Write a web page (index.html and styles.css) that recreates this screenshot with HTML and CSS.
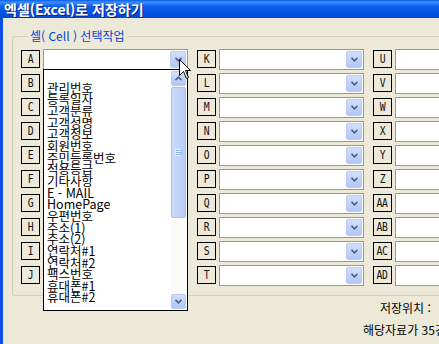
FILE: index.html
```html
<!DOCTYPE html>
<html lang="ko">
<head>
<meta charset="utf-8">
<title>엑셀(Excel)로 저장하기</title>
<link rel="stylesheet" href="styles.css">
</head>
<body>
<div class="window">
  <div class="titlebar"><span class="title">엑셀(Excel)로 저장하기</span></div>
  <div class="frame">
    <fieldset class="group">
      <legend class="legend">셀( Cell ) 선택작업</legend>
      <div class="grid">
        <div class="cell"><span class="tag"><span class="tl">A</span></span><div class="combo"><span class="field"></span><span class="btn"><svg width="7" height="5" viewBox="0 0 7 5"><path d="M0.5 0.8 L3.5 3.8 L6.5 0.8" fill="none" stroke="#4d6185" stroke-width="1.6"/></svg></span></div></div>
        <div class="cell"><span class="tag"><span class="tl">B</span></span><div class="combo"><span class="field"></span><span class="btn"><svg width="7" height="5" viewBox="0 0 7 5"><path d="M0.5 0.8 L3.5 3.8 L6.5 0.8" fill="none" stroke="#4d6185" stroke-width="1.6"/></svg></span></div></div>
        <div class="cell"><span class="tag"><span class="tl">C</span></span><div class="combo"><span class="field"></span><span class="btn"><svg width="7" height="5" viewBox="0 0 7 5"><path d="M0.5 0.8 L3.5 3.8 L6.5 0.8" fill="none" stroke="#4d6185" stroke-width="1.6"/></svg></span></div></div>
        <div class="cell"><span class="tag"><span class="tl">D</span></span><div class="combo"><span class="field"></span><span class="btn"><svg width="7" height="5" viewBox="0 0 7 5"><path d="M0.5 0.8 L3.5 3.8 L6.5 0.8" fill="none" stroke="#4d6185" stroke-width="1.6"/></svg></span></div></div>
        <div class="cell"><span class="tag"><span class="tl">E</span></span><div class="combo"><span class="field"></span><span class="btn"><svg width="7" height="5" viewBox="0 0 7 5"><path d="M0.5 0.8 L3.5 3.8 L6.5 0.8" fill="none" stroke="#4d6185" stroke-width="1.6"/></svg></span></div></div>
        <div class="cell"><span class="tag"><span class="tl">F</span></span><div class="combo"><span class="field"></span><span class="btn"><svg width="7" height="5" viewBox="0 0 7 5"><path d="M0.5 0.8 L3.5 3.8 L6.5 0.8" fill="none" stroke="#4d6185" stroke-width="1.6"/></svg></span></div></div>
        <div class="cell"><span class="tag"><span class="tl">G</span></span><div class="combo"><span class="field"></span><span class="btn"><svg width="7" height="5" viewBox="0 0 7 5"><path d="M0.5 0.8 L3.5 3.8 L6.5 0.8" fill="none" stroke="#4d6185" stroke-width="1.6"/></svg></span></div></div>
        <div class="cell"><span class="tag"><span class="tl">H</span></span><div class="combo"><span class="field"></span><span class="btn"><svg width="7" height="5" viewBox="0 0 7 5"><path d="M0.5 0.8 L3.5 3.8 L6.5 0.8" fill="none" stroke="#4d6185" stroke-width="1.6"/></svg></span></div></div>
        <div class="cell"><span class="tag"><span class="tl">I</span></span><div class="combo"><span class="field"></span><span class="btn"><svg width="7" height="5" viewBox="0 0 7 5"><path d="M0.5 0.8 L3.5 3.8 L6.5 0.8" fill="none" stroke="#4d6185" stroke-width="1.6"/></svg></span></div></div>
        <div class="cell"><span class="tag"><span class="tl">J</span></span><div class="combo"><span class="field"></span><span class="btn"><svg width="7" height="5" viewBox="0 0 7 5"><path d="M0.5 0.8 L3.5 3.8 L6.5 0.8" fill="none" stroke="#4d6185" stroke-width="1.6"/></svg></span></div></div>

        <div class="cell"><span class="tag"><span class="tl">K</span></span><div class="combo"><span class="field"></span><span class="btn"><svg width="7" height="5" viewBox="0 0 7 5"><path d="M0.5 0.8 L3.5 3.8 L6.5 0.8" fill="none" stroke="#4d6185" stroke-width="1.6"/></svg></span></div></div>
        <div class="cell"><span class="tag"><span class="tl">L</span></span><div class="combo"><span class="field"></span><span class="btn"><svg width="7" height="5" viewBox="0 0 7 5"><path d="M0.5 0.8 L3.5 3.8 L6.5 0.8" fill="none" stroke="#4d6185" stroke-width="1.6"/></svg></span></div></div>
        <div class="cell"><span class="tag"><span class="tl">M</span></span><div class="combo"><span class="field"></span><span class="btn"><svg width="7" height="5" viewBox="0 0 7 5"><path d="M0.5 0.8 L3.5 3.8 L6.5 0.8" fill="none" stroke="#4d6185" stroke-width="1.6"/></svg></span></div></div>
        <div class="cell"><span class="tag"><span class="tl">N</span></span><div class="combo"><span class="field"></span><span class="btn"><svg width="7" height="5" viewBox="0 0 7 5"><path d="M0.5 0.8 L3.5 3.8 L6.5 0.8" fill="none" stroke="#4d6185" stroke-width="1.6"/></svg></span></div></div>
        <div class="cell"><span class="tag"><span class="tl">O</span></span><div class="combo"><span class="field"></span><span class="btn"><svg width="7" height="5" viewBox="0 0 7 5"><path d="M0.5 0.8 L3.5 3.8 L6.5 0.8" fill="none" stroke="#4d6185" stroke-width="1.6"/></svg></span></div></div>
        <div class="cell"><span class="tag"><span class="tl">P</span></span><div class="combo"><span class="field"></span><span class="btn"><svg width="7" height="5" viewBox="0 0 7 5"><path d="M0.5 0.8 L3.5 3.8 L6.5 0.8" fill="none" stroke="#4d6185" stroke-width="1.6"/></svg></span></div></div>
        <div class="cell"><span class="tag"><span class="tl">Q</span></span><div class="combo"><span class="field"></span><span class="btn"><svg width="7" height="5" viewBox="0 0 7 5"><path d="M0.5 0.8 L3.5 3.8 L6.5 0.8" fill="none" stroke="#4d6185" stroke-width="1.6"/></svg></span></div></div>
        <div class="cell"><span class="tag"><span class="tl">R</span></span><div class="combo"><span class="field"></span><span class="btn"><svg width="7" height="5" viewBox="0 0 7 5"><path d="M0.5 0.8 L3.5 3.8 L6.5 0.8" fill="none" stroke="#4d6185" stroke-width="1.6"/></svg></span></div></div>
        <div class="cell"><span class="tag"><span class="tl">S</span></span><div class="combo"><span class="field"></span><span class="btn"><svg width="7" height="5" viewBox="0 0 7 5"><path d="M0.5 0.8 L3.5 3.8 L6.5 0.8" fill="none" stroke="#4d6185" stroke-width="1.6"/></svg></span></div></div>
        <div class="cell"><span class="tag"><span class="tl">T</span></span><div class="combo"><span class="field"></span><span class="btn"><svg width="7" height="5" viewBox="0 0 7 5"><path d="M0.5 0.8 L3.5 3.8 L6.5 0.8" fill="none" stroke="#4d6185" stroke-width="1.6"/></svg></span></div></div>

        <div class="cell"><span class="tag"><span class="tl">U</span></span><div class="combo"><span class="field"></span></div></div>
        <div class="cell"><span class="tag"><span class="tl">V</span></span><div class="combo"><span class="field"></span></div></div>
        <div class="cell"><span class="tag"><span class="tl">W</span></span><div class="combo"><span class="field"></span></div></div>
        <div class="cell"><span class="tag"><span class="tl">X</span></span><div class="combo"><span class="field"></span></div></div>
        <div class="cell"><span class="tag"><span class="tl">Y</span></span><div class="combo"><span class="field"></span></div></div>
        <div class="cell"><span class="tag"><span class="tl">Z</span></span><div class="combo"><span class="field"></span></div></div>
        <div class="cell"><span class="tag"><span class="tl">AA</span></span><div class="combo"><span class="field"></span></div></div>
        <div class="cell"><span class="tag"><span class="tl">AB</span></span><div class="combo"><span class="field"></span></div></div>
        <div class="cell"><span class="tag"><span class="tl">AC</span></span><div class="combo"><span class="field"></span></div></div>
        <div class="cell"><span class="tag"><span class="tl">AD</span></span><div class="combo"><span class="field"></span></div></div>
      </div>
    </fieldset>
    <div class="footer">
      <div class="line1">저장위치 : </div>
      <div class="line2">해당자료가 35건</div>
    </div>
  </div>
</div>

<div class="dropdown">
  <div class="items">
    <div class="item">&nbsp;</div>
    <div class="item">관리번호</div>
    <div class="item">등록일자</div>
    <div class="item">고객분류</div>
    <div class="item">고객성명</div>
    <div class="item">고객정보</div>
    <div class="item">회원번호</div>
    <div class="item">주민등록번호</div>
    <div class="item">적용등급</div>
    <div class="item">기타사항</div>
    <div class="item">E - MAIL</div>
    <div class="item">HomePage</div>
    <div class="item">우편번호</div>
    <div class="item">주소(1)</div>
    <div class="item">주소(2)</div>
    <div class="item">연락처#1</div>
    <div class="item">연락처#2</div>
    <div class="item">팩스번호</div>
    <div class="item">휴대폰#1</div>
    <div class="item">휴대폰#2</div>
  </div>
  <div class="scrollbar">
    <span class="sbtn"><svg width="7" height="5" viewBox="0 0 7 5"><path d="M0.5 4.2 L3.5 1.2 L6.5 4.2" fill="none" stroke="#4d6185" stroke-width="1.6"/></svg></span>
    <span class="track-top"></span>
    <span class="thumb"><svg width="7" height="7" viewBox="0 0 7 7"><path d="M0 0.5 H6 M0 2.5 H6 M0 4.5 H6 M0 6.5 H6" stroke="#eef3fe" stroke-width="1"/><path d="M1 1.5 H7 M1 3.5 H7 M1 5.5 H7" stroke="#8cb0f8" stroke-width="1"/></svg></span>
    <span class="track"></span>
    <span class="sbtn"><svg width="7" height="5" viewBox="0 0 7 5"><path d="M0.5 0.8 L3.5 3.8 L6.5 0.8" fill="none" stroke="#4d6185" stroke-width="1.6"/></svg></span>
  </div>
</div>

<svg class="cursor" width="13" height="21" viewBox="0 0 13 21">
  <path d="M0.5 0.5 L0.5 16.5 L4.5 12.5 L7.5 19.5 L9.5 18.5 L6.5 11.5 L11.5 11.5 Z" fill="#fff" stroke="#000" stroke-width="1" stroke-linejoin="miter"/>
</svg>
</body>
</html>
```

FILE: styles.css
```css
html, body {
  margin: 0;
  padding: 0;
}
body {
  width: 439px;
  height: 344px;
  overflow: hidden;
  background: #ece9d8;
  font-family: "Noto Sans CJK KR", "Noto Sans", sans-serif;
  font-size: 12px;
  position: relative;
}
.window {
  display: flex;
  flex-direction: column;
  height: 344px;
}
.titlebar {
  height: 18px;
  flex: none;
  background: linear-gradient(#0a5ef0 0%, #3c8dfa 12%, #0b5fee 35%, #0453e3 70%, #0049d4 100%);
  display: flex;
  align-items: center;
  padding-left: 4px;
}
.title {
  color: #fff;
  font-weight: bold;
  font-size: 14px;
  line-height: 16px;
  text-shadow: 1px 1px 0 #0a1f8a;
}
.frame {
  flex: 1;
  border-left: 3px solid #0d4fe2;
  display: flex;
  flex-direction: column;
}
.group {
  margin: 11px 0 0 9px;
  padding: 6px 0 9px 8px;
  border: 1px solid #d0d0bf;
  border-right: none;
  border-radius: 3px 0 0 3px;
  min-width: 0;
}
.legend {
  color: #0046d5;
  font-size: 12px;
  line-height: 14px;
  padding: 0 2px;
  margin-left: 7px;
}
.grid {
  display: grid;
  grid-auto-flow: column;
  grid-template-rows: repeat(10, 21px);
  grid-auto-columns: 167px;
  row-gap: 3px;
  column-gap: 9px;
}
.cell {
  display: flex;
  align-items: flex-start;
  gap: 3px;
}
.tag {
  box-sizing: border-box;
  width: 19px;
  height: 18px;
  margin-top: 1px;
  border: 1px solid #000;
  display: flex;
  align-items: center;
  justify-content: center;
  flex: none;
  overflow: hidden;
}
.tl {
  display: inline-block;
  font-family: "DejaVu Sans Mono", monospace;
  font-size: 12.5px;
  line-height: 16px;
  color: #111;
  transform: scaleX(0.78);
  letter-spacing: -0.5px;
  white-space: nowrap;
}
.combo {
  box-sizing: border-box;
  width: 145px;
  height: 21px;
  border: 1px solid #7f9db9;
  background: #fff;
  padding: 1px;
  display: flex;
  flex: none;
}
.field {
  flex: 1;
}
.btn {
  box-sizing: border-box;
  width: 16px;
  height: 17px;
  border: 1px solid #b9cbf4;
  border-radius: 2px;
  background: linear-gradient(#d3e0fd, #c0d2fb 50%, #b2c7f7);
  display: flex;
  align-items: center;
  justify-content: center;
}
.footer {
  margin-top: 5px;
  color: #000;
  font-size: 12px;
  line-height: 14px;
  white-space: nowrap;
}
.line1 {
  padding-left: 377px;
}
.line2 {
  padding-left: 360px;
  margin-top: 8px;
}
.dropdown {
  position: absolute;
  left: 43px;
  top: 69px;
  width: 145px;
  height: 242px;
  box-sizing: border-box;
  border: 1px solid #000;
  background: #fff;
  display: flex;
}
.items {
  flex: 1;
  overflow: hidden;
  padding-left: 3px;
}
.item {
  font-size: 12.5px;
  line-height: 11.67px;
  height: 11.67px;
  white-space: nowrap;
  color: #000;
}
.scrollbar {
  width: 15px;
  margin: 1px 1px 1px 0;
  display: flex;
  flex-direction: column;
  background: #fbfbf8;
}
.sbtn {
  box-sizing: border-box;
  height: 15px;
  flex: none;
  border: 1px solid #b9cbf4;
  border-radius: 2px;
  background: linear-gradient(#d3e0fd, #c0d2fb 50%, #b2c7f7);
  display: flex;
  align-items: center;
  justify-content: center;
}
.track-top {
  height: 1px;
  flex: none;
}
.thumb {
  box-sizing: border-box;
  height: 131px;
  flex: none;
  border: 1px solid #a9bff0;
  border-radius: 2px;
  background: linear-gradient(90deg, #cddbfc, #c3d4fb 50%, #b8cbf8);
  display: flex;
  align-items: center;
  justify-content: center;
}
.track {
  flex: 1;
}
.cursor {
  position: absolute;
  left: 179px;
  top: 59px;
}
```
